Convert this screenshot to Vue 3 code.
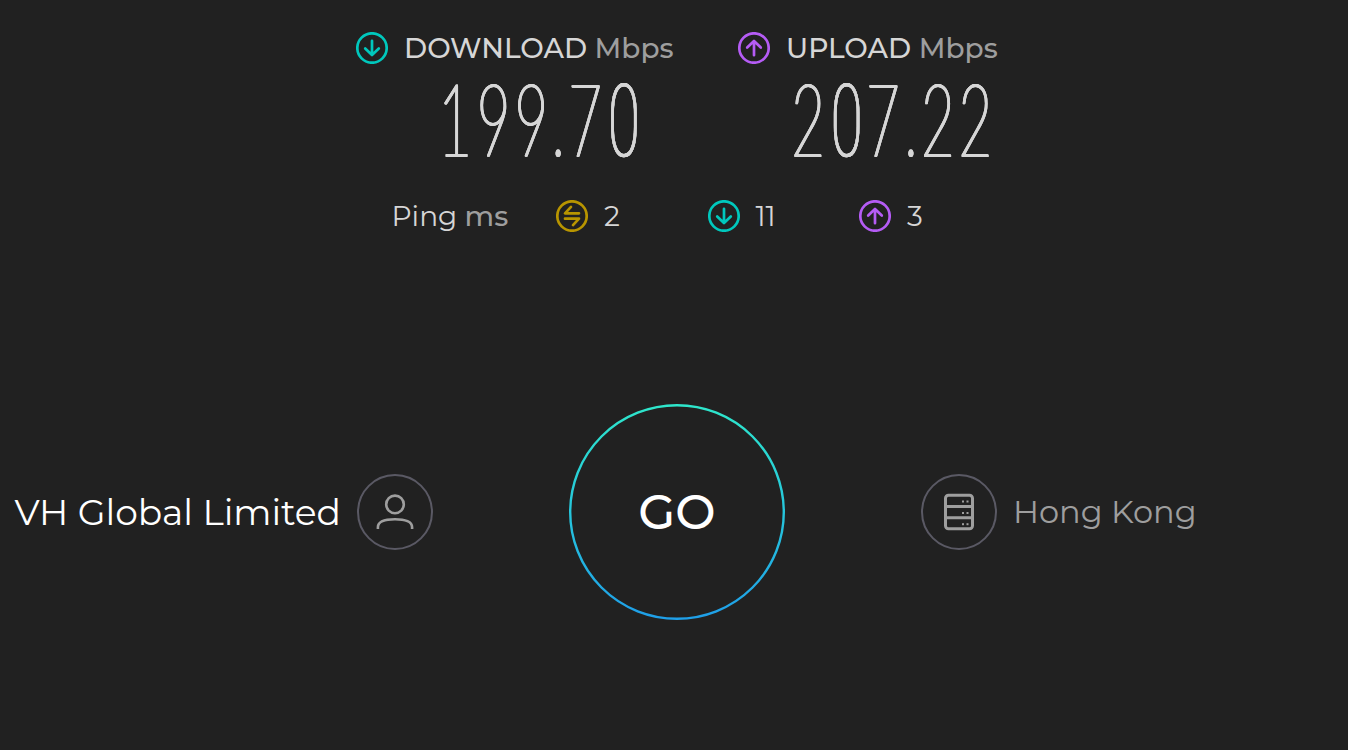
<template>
  <div class="page">
    <div class="results">
      <div v-for="item in speeds" :key="item.name" class="speed" :class="item.kind">
        <div class="heading">
          <svg class="ring" :class="item.kind" viewBox="0 0 32 32">
            <circle cx="16" cy="16" r="14.7" />
            <path :d="arrows[item.kind]" />
          </svg>
          <p>{{ item.name }} <span>Mbps</span></p>
        </div>
        <svg class="digits" viewBox="0 0 300 88">
          <text y="79.6" :transform="`scale(${squeeze}, 1)`"><tspan v-for="(char, i) in item.value" :key="i" :x="item.centers[i] / squeeze" :class="{ upright: char === '0', dot: char === '.' }">{{ char }}</tspan></text>
        </svg>
      </div>
    </div>

    <div class="pings">
      <p class="title">Ping <span>ms</span></p>
      <div v-for="ping in pings" :key="ping.kind" class="ping">
        <svg class="ring" :class="ping.kind" viewBox="0 0 32 32">
          <circle cx="16" cy="16" r="14.7" />
          <path :d="arrows[ping.kind]" />
        </svg>
        <p>{{ ping.value }}</p>
      </div>
    </div>

    <div class="start">
      <div class="side provider">
        <p>VH Global Limited</p>
        <svg class="badge" viewBox="0 0 76 76">
          <circle class="outline" cx="38" cy="38" r="37" />
          <g class="user">
            <circle cx="38" cy="30.4" r="8.8" />
            <path d="M20.9 55v-1.8c0-5.2 6.5-8 17.1-8s17.1 2.8 17.1 8v1.8" />
          </g>
        </svg>
      </div>
      <button class="go">
        <svg viewBox="0 0 216 216">
          <defs>
            <linearGradient id="goRing" x1="0" y1="0" x2="0" y2="1">
              <stop offset="0" stop-color="#2ee6cb" />
              <stop offset="0.5" stop-color="#26c6dc" />
              <stop offset="1" stop-color="#1f9fe8" />
            </linearGradient>
          </defs>
          <circle cx="108" cy="108" r="106.8" />
        </svg>
        <span>GO</span>
      </button>
      <div class="side server">
        <svg class="badge" viewBox="0 0 76 76">
          <circle class="outline" cx="38" cy="38" r="37" />
          <g class="rack">
            <rect x="24.5" y="21.2" width="27" height="33.6" rx="3" />
            <path d="M24.5 32.4h27M24.5 43.8h27" />
          </g>
          <g class="leds">
            <rect v-for="led in leds" :key="led.x + '-' + led.y" :x="led.x" :y="led.y" width="2" height="2" />
          </g>
        </svg>
        <p>Hong Kong</p>
      </div>
    </div>
  </div>
</template>

<script setup>
const squeeze = 0.57;

// centers: middle of every character inside the digits box
const speeds = [
  { name: "DOWNLOAD", kind: "down", value: "199.70", centers: [50.6, 89.2, 126.8, 154.2, 180.7, 219.4] },
  { name: "UPLOAD", kind: "up", value: "207.22", centers: [21.6, 60.2, 96.4, 125, 151.4, 188.8] },
];

const pings = [
  { kind: "idle", value: 2 },
  { kind: "down", value: 11 },
  { kind: "up", value: 3 },
];

const arrows = {
  down: "M16 8.8v14M9.2 16.5l6.8 6.5l6.8-6.5",
  up: "M16 23.2v-14M9.2 15.5l6.8-6.5l6.8 6.5",
  idle: "M15 6.9l-6 6.4h14M9 18.7h14l-6 6.4",
};

const leds = [26.5, 38, 49.2].flatMap((y) => [
  { x: 41, y },
  { x: 45.5, y },
]);
</script>

<style>
body {
  background: #212121;
}
</style>

<style scoped>
.page {
  height: 750px;
  overflow: hidden;
  background: #212121;
  color: #d6d6d6;
  font-family: Montserrat, Inter, sans-serif;
}
p {
  margin: 0;
  white-space: nowrap;
}
.results {
  display: flex;
  padding: 32px 0 0 356px;
}
.speed {
  width: 382px;
}
.heading {
  display: flex;
  gap: 16px;
  font-size: 28px;
  font-weight: 500;
  line-height: 32px;
}
.heading span,
.title span {
  color: #9e9e9e;
}
.title span {
  font-weight: 500;
}
.ring {
  flex: none;
  width: 32px;
  height: 32px;
  fill: none;
  stroke-width: 2.7;
  stroke-linecap: round;
  stroke-linejoin: round;
}
.ring.down {
  stroke: #00c8bd;
}
.ring.up {
  stroke: #b55cf5;
}
.ring.idle {
  stroke: #b89500;
}
/* the squeezed hairline digits get their vertical strokes back from the side shadows */
.digits {
  display: block;
  overflow: visible;
  width: 300px;
  height: 88px;
  margin: 12px 0 0 48.5px;
  font-family: Lato, sans-serif;
  font-size: 100.5px;
  font-weight: 100;
  text-anchor: middle;
  fill: #d6d6d6;
  stroke: #d6d6d6;
  stroke-width: 1.8;
  stroke-linejoin: round;
  filter: drop-shadow(0.7px 0 0 #d6d6d6) drop-shadow(-0.7px 0 0 #d6d6d6);
}
.upright {
  font-family: Roboto, sans-serif;
  stroke-width: 0.6;
}
.dot {
  font-family: Roboto, sans-serif;
  stroke-width: 2;
}
.pings {
  display: flex;
  padding: 36px 0 0 391.5px;
  font-size: 28px;
  line-height: 32px;
}
.title {
  width: 164.5px;
}
.ping {
  display: flex;
  gap: 16px;
  width: 151.5px;
}
.start {
  display: flex;
  align-items: center;
  margin-top: 172px;
}
.side {
  display: flex;
  align-items: center;
  gap: 16px;
}
.provider {
  justify-content: flex-end;
  width: 433px;
  color: #fff;
  font-size: 36px;
}
.server {
  color: #9e9e9e;
  font-size: 32px;
}
.server p {
  padding-bottom: 2px;
}
.badge {
  flex: none;
  width: 76px;
  height: 76px;
  fill: none;
}
.outline {
  stroke: #5a5964;
  stroke-width: 2;
}
.user {
  stroke: #9e9e9e;
  stroke-width: 2.6;
}
.rack {
  stroke: #9e9e9e;
  stroke-width: 3;
}
.leds {
  fill: #9e9e9e;
}
.go {
  display: grid;
  place-items: center;
  width: 216px;
  height: 216px;
  margin: 0 136px;
  padding: 0;
  border: none;
  background: none;
  color: #fff;
  font-family: inherit;
  font-size: 48px;
  font-weight: 500;
}
.go svg,
.go span {
  grid-area: 1 / 1;
}
.go svg {
  width: 216px;
  height: 216px;
  fill: none;
  stroke: url(#goRing);
  stroke-width: 2.4;
}
</style>
